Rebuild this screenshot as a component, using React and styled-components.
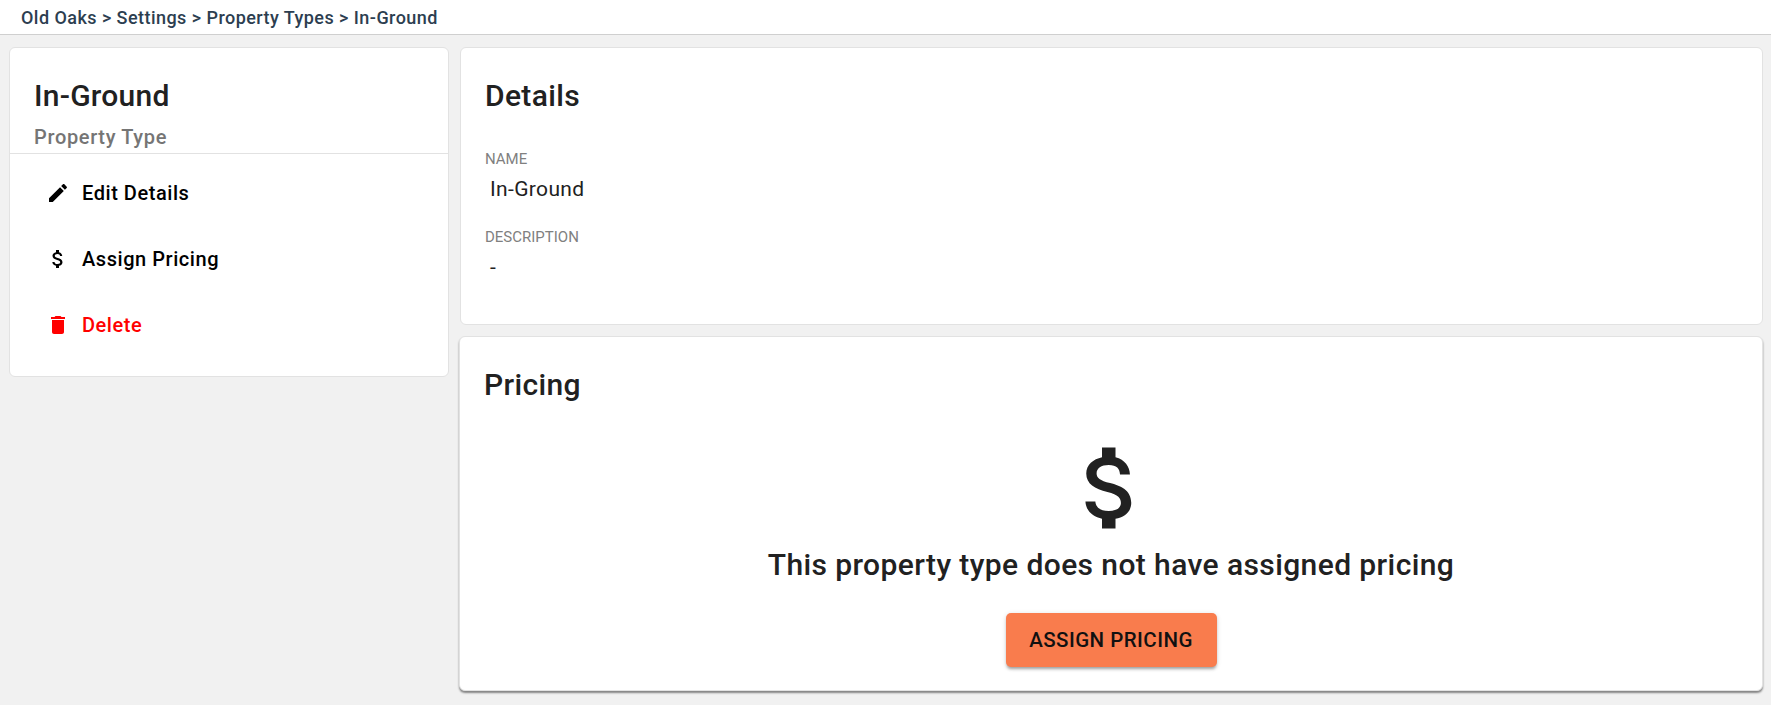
import React from "react";
import styled, { createGlobalStyle } from "styled-components";

const GlobalStyle = createGlobalStyle`
  html, body {
    margin: 0;
    padding: 0;
    background: #f1f1f1;
    font-family: Roboto, "Liberation Sans", sans-serif;
    overflow: hidden;
  }
  * { box-sizing: border-box; }
`;

const EDIT = "M3 17.25V21h3.75L17.81 9.94l-3.75-3.75L3 17.25zM20.71 7.04c.39-.39.39-1.02 0-1.41l-2.34-2.34c-.39-.39-1.02-.39-1.41 0l-1.83 1.83 3.75 3.75 1.83-1.83z";
const MONEY = "M11.8 10.9c-2.27-.59-3-1.2-3-2.15 0-1.09 1.01-1.85 2.7-1.85 1.78 0 2.44.85 2.5 2.1h2.21c-.07-1.72-1.12-3.3-3.21-3.81V3h-3v2.16c-1.94.42-3.5 1.68-3.5 3.61 0 2.31 1.91 3.46 4.7 4.13 2.5.6 3 1.48 3 2.41 0 .69-.49 1.79-2.7 1.79-2.06 0-2.87-.92-2.98-2.1h-2.2c.12 2.19 1.76 3.42 3.68 3.83V21h3v-2.15c1.95-.37 3.5-1.5 3.5-3.55 0-2.84-2.43-3.81-4.7-4.4z";
const TRASH = "M6 19c0 1.1.9 2 2 2h8c1.1 0 2-.9 2-2V7H6v12zM19 4h-3.5l-1-1h-5l-1 1H5v2h14V4z";

const Page = styled.div`
  width: 1771px;
  height: 705px;
`;

const TopBar = styled.div`
  height: 35px;
  background: #fff;
  border-bottom: 1px solid #cfcfcf;
  padding: 0 0 0 21px;
  display: flex;
  align-items: center;
  font-size: 18px;
  font-weight: 500;
  letter-spacing: 0.45px;
  color: #2c3e50;
`;

const Columns = styled.div`
  display: flex;
  align-items: flex-start;
  gap: 11px;
  padding: 12px 8px 0 9px;
`;

const Card = styled.section`
  background: #fff;
  border: 1px solid #e2e2e2;
  border-radius: 6px;
`;

const SideCard = styled(Card)`
  width: 440px;
  height: 330px;
  flex: none;
`;

const SideHead = styled.div`
  height: 106px;
  padding: 31px 0 0 24px;
  border-bottom: 1px solid #e2e2e2;
`;

const SideTitle = styled.h1`
  margin: 0;
  font-size: 30px;
  line-height: 34px;
  font-weight: 500;
  letter-spacing: 0.25px;
  color: #212121;
`;

const SideSub = styled.div`
  margin-top: 12px;
  font-size: 20px;
  line-height: 24px;
  font-weight: 500;
  letter-spacing: 0.65px;
  color: #757575;
`;

const Menu = styled.div`
  display: flex;
  flex-direction: column;
  padding-top: 6px;
`;

const MenuItem = styled.div`
  height: 66px;
  display: flex;
  align-items: center;
  padding-left: 36px;
  gap: 12px;
  font-size: 20px;
  font-weight: 500;
  letter-spacing: 0.55px;
  color: ${(p) => (p.$danger ? "#ff0000" : "#000")};
`;

const Icon = styled.svg`
  display: block;
  flex: none;
  fill: currentColor;
  width: ${(p) => p.$size}px;
  height: ${(p) => p.$size}px;
`;

const Main = styled.div`
  flex: 1;
  display: flex;
  flex-direction: column;
  gap: 12px;
`;

const DetailsCard = styled(Card)`
  height: 278px;
  padding: 31px 0 0 24px;
`;

const PricingCard = styled(Card)`
  height: 355px;
  padding: 31px 0 0 24px;
  margin: -1px 0 0 -1px;
  box-shadow: 0 2px 2px rgba(0, 0, 0, 0.45);
`;

const SectionTitle = styled.h2`
  margin: 0;
  font-size: 30px;
  line-height: 34px;
  font-weight: 500;
  letter-spacing: 0.35px;
  color: #212121;
`;

const FieldList = styled.dl`
  margin: 37px 0 0;
`;

const FieldLabel = styled.dt`
  font-size: 15px;
  line-height: 18px;
  color: #808080;
`;

const FieldValue = styled.dd`
  margin: 9px 0 27px 5px;
  font-size: 21px;
  line-height: 24px;
  letter-spacing: 0.35px;
  color: #212121;
`;

const Empty = styled.div`
  display: flex;
  flex-direction: column;
  align-items: center;
  margin: 32px 0 0 -24px;
  color: #212121;
`;

const EmptyText = styled.div`
  margin-top: 5px;
  font-size: 30px;
  line-height: 36px;
  font-weight: 500;
  letter-spacing: 0.4px;
`;

const AssignButton = styled.button`
  margin-top: 30px;
  width: 211px;
  height: 54px;
  border: 0;
  border-radius: 5px;
  background: #f97c4d;
  color: #111;
  font-family: inherit;
  font-size: 20.5px;
  font-weight: 500;
  letter-spacing: 0.45px;
  box-shadow: 0 3px 3px -1px rgba(0, 0, 0, 0.3), 0 1px 5px rgba(0, 0, 0, 0.15);
`;

const Glyph = ({ d, size }) => (
  <Icon $size={size} viewBox="0 0 24 24" aria-hidden="true">
    <path d={d} />
  </Icon>
);

export default function App() {
  return (
    <Page>
      <GlobalStyle />
      <TopBar>Old Oaks &gt; Settings &gt; Property Types &gt; In-Ground</TopBar>
      <Columns>
        <SideCard>
          <SideHead>
            <SideTitle>In-Ground</SideTitle>
            <SideSub>Property Type</SideSub>
          </SideHead>
          <Menu>
            <MenuItem>
              <Glyph d={EDIT} size={24} />
              Edit Details
            </MenuItem>
            <MenuItem>
              <Glyph d={MONEY} size={24} />
              Assign Pricing
            </MenuItem>
            <MenuItem $danger>
              <Glyph d={TRASH} size={24} />
              Delete
            </MenuItem>
          </Menu>
        </SideCard>
        <Main>
          <DetailsCard>
            <SectionTitle>Details</SectionTitle>
            <FieldList>
              <FieldLabel>NAME</FieldLabel>
              <FieldValue>In-Ground</FieldValue>
              <FieldLabel>DESCRIPTION</FieldLabel>
              <FieldValue>-</FieldValue>
            </FieldList>
          </DetailsCard>
          <PricingCard>
            <SectionTitle>Pricing</SectionTitle>
            <Empty>
              <Glyph d={MONEY} size={108} />
              <EmptyText>This property type does not have assigned pricing</EmptyText>
              <AssignButton>ASSIGN PRICING</AssignButton>
            </Empty>
          </PricingCard>
        </Main>
      </Columns>
    </Page>
  );
}
